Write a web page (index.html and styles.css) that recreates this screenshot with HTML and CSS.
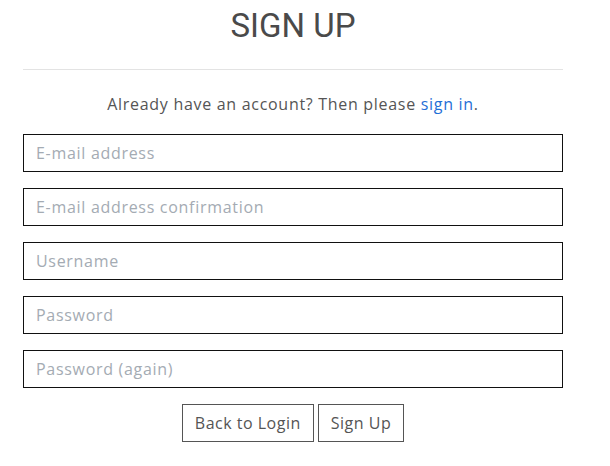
FILE: index.html
```html
<!DOCTYPE html>
<html>
<head>
  <title>Sign Up</title>
  <link rel="stylesheet" href="styles.css">
</head>
<body>
  <div class="signup-container">
    <h1 class="signup-title">SIGN UP</h1>
    <hr class="signup-rule">
    <p class="signup-intro">Already have an account? Then please <a href="#">sign in</a>.</p>
    <form class="signup-form">
      <input type="email" placeholder="E-mail address">
      <input type="email" placeholder="E-mail address confirmation">
      <input type="text" placeholder="Username">
      <input type="password" placeholder="Password">
      <input type="password" placeholder="Password (again)">
      <div class="signup-actions">
        <a class="signup-btn" href="#">Back to Login</a>
        <button class="signup-btn" type="submit">Sign Up</button>
      </div>
    </form>
  </div>
</body>
</html>
```

FILE: styles.css
```css
body {
  margin: 0;
  background-color: #fff;
  font-family: "Open Sans", sans-serif;
  color: #555;
}

.signup-container {
  width: 540px;
  margin-left: 23px;
}

.signup-title {
  margin: 0;
  padding-top: 6px;
  height: 45px;
  text-align: center;
  font-family: Roboto, Arial, sans-serif;
  font-weight: normal;
  font-size: 33px;
  line-height: 40px;
  color: #4a4a4a;
}

.signup-rule {
  margin: 18px 0 0 0;
  border: none;
  border-top: 1px solid #e3e3e3;
}

.signup-intro {
  margin: 0;
  padding: 22px 0 18px 0;
  text-align: center;
  font-size: 16px;
  line-height: 24px;
  letter-spacing: 0.7px;
}

.signup-intro a {
  color: #1f6fd6;
  text-decoration: none;
}

.signup-form {
  display: flex;
  flex-direction: column;
  gap: 16px;
}

.signup-form input {
  box-sizing: border-box;
  height: 38px;
  padding: 0 12px;
  border: 1px solid #111;
  font-family: "Open Sans", sans-serif;
  font-size: 16px;
  letter-spacing: 0.7px;
  color: #333;
  outline: none;
}

.signup-form input::placeholder {
  color: #a4abb3;
}

.signup-actions {
  display: flex;
  justify-content: center;
  gap: 4px;
}

.signup-btn {
  box-sizing: border-box;
  height: 38px;
  padding: 0 12px;
  border: 1px solid #555;
  background: #fff;
  font-family: "Open Sans", sans-serif;
  font-size: 16px;
  letter-spacing: 0.5px;
  line-height: 36px;
  color: #555;
  text-decoration: none;
  cursor: pointer;
}
```
